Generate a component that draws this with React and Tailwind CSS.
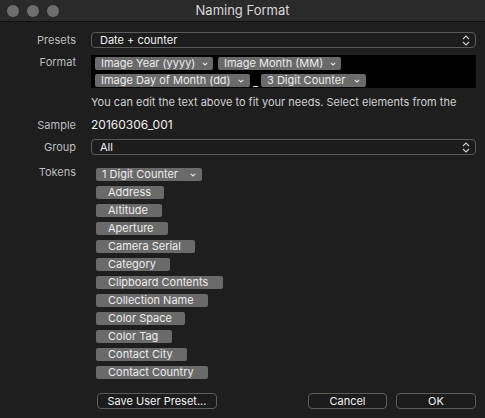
import React from "react";

const font = { fontFamily: "Inter, 'Liberation Sans', sans-serif" };

function Chevron() {
  return (
    <svg width="6" height="4" viewBox="0 0 6 4" className="ml-[7px] shrink-0">
      <path d="M0.8 0.8 L3 3 L5.2 0.8" fill="none" stroke="#e6e6e6" strokeWidth="1.1" />
    </svg>
  );
}

function UpDown() {
  return (
    <svg width="8" height="11" viewBox="0 0 8 11">
      <path d="M1 4 L4 1 L7 4" fill="none" stroke="#cfcfcf" strokeWidth="1.1" />
      <path d="M1 7 L4 10 L7 7" fill="none" stroke="#cfcfcf" strokeWidth="1.1" />
    </svg>
  );
}

function FChip({ children, w }) {
  return (
    <div
      className="flex h-[13px] items-center rounded-[2px] bg-[#6a6a6a] pl-[6px] text-[11px] leading-[13px] text-[#ececec]"
      style={{ width: w }}
    >
      <span className="whitespace-nowrap">{children}</span>
      <div className="flex-1" />
      <Chevron />
      <div className="w-[6px]" />
    </div>
  );
}

function Select({ children }) {
  return (
    <div className="flex h-[16px] items-center rounded-[4px] border border-[#5a5a5a] bg-[#1c1c1c] pl-[8px] pr-[5px] text-[11px] text-[#f0f0f0]">
      <span className="flex-1">{children}</span>
      <UpDown />
    </div>
  );
}

function Label({ children, className = "" }) {
  return (
    <div className={"text-right text-[11px] text-[#bdbdbd] " + className}>{children}</div>
  );
}

const tokens = [
  ["Address", 68],
  ["Altitude", 66],
  ["Aperture", 72],
  ["Camera Serial", 99],
  ["Category", 74],
  ["Clipboard Contents", 127],
  ["Collection Name", 112],
  ["Color Space", 89],
  ["Color Tag", 76],
  ["Contact City", 91],
  ["Contact Country", 112],
];

function Button({ children, w }) {
  return (
    <div
      className="flex h-[16px] items-center justify-center rounded-[4px] border border-[#5c5c5c] bg-[#1c1c1c] text-[11px] text-[#f2f2f2]"
      style={{ width: w }}
    >
      {children}
    </div>
  );
}

export default function App() {
  return (
    <div className="h-[418px] w-[485px] overflow-hidden bg-[#1e1e1e]" style={font}>
      {/* Title bar */}
      <div className="relative flex h-[22px] items-center border-b border-[#111] bg-[#2a2a2a]">
        <div className="flex gap-[8px] pl-[7px]">
          <div className="h-[12px] w-[12px] rounded-full bg-[#6e6e6e]" />
          <div className="h-[12px] w-[12px] rounded-full bg-[#6e6e6e]" />
          <div className="h-[12px] w-[12px] rounded-full bg-[#6e6e6e]" />
        </div>
        <div className="absolute inset-0 flex items-center justify-center text-[13px] text-[#d8d8d8]">
          Naming Format
        </div>
      </div>

      <div className="grid grid-cols-[76px_1fr] gap-x-[15px] pr-[9px] pt-[10px]">
        {/* Presets */}
        <Label className="leading-[16px]">Presets</Label>
        <Select>Date + counter</Select>

        {/* Format */}
        <Label className="mt-[8px] leading-[13px]">Format</Label>
        <div className="mt-[7px] h-[33px] bg-black pl-[4px] pt-[2px]">
          <div className="flex gap-[5px]">
            <FChip w={118}>Image Year (yyyy)</FChip>
            <FChip w={123}>Image Month (MM)</FChip>
          </div>
          <div className="mt-[2px] flex items-center">
            <FChip w={155}>Image Day of Month (dd)</FChip>
            <span className="mx-[3px] mt-[4px] text-[11px] leading-[13px] text-[#ececec]">_</span>
            <FChip w={105}>3 Digit Counter</FChip>
          </div>
        </div>

        {/* Help */}
        <div />
        <div className="mt-[7px] whitespace-nowrap text-[11px] leading-[14px] text-[#cfcfcf]">
          You can edit the text above to fit your needs. Select elements from the
        </div>

        {/* Sample */}
        <Label className="mt-[9px] leading-[14px]">Sample</Label>
        <div className="mt-[9px] text-[12px] leading-[14px] text-[#f0f0f0]">20160306_001</div>

        {/* Group */}
        <Label className="mt-[7px] leading-[16px]">Group</Label>
        <div className="mt-[7px]">
          <Select>All</Select>
        </div>

        {/* Tokens */}
        <Label className="mt-[10px] leading-[14px]">Tokens</Label>
        <div className="mt-[13px] flex flex-col items-start gap-[5px] pl-[5px]">
          <FChip w={106}>1 Digit Counter</FChip>
          {tokens.map(([t, w]) => (
            <div
              key={t}
              className="h-[13px] rounded-[2px] bg-[#6a6a6a] pl-[12px] text-[11px] leading-[13px] text-[#ececec]"
              style={{ width: w }}
            >
              {t}
            </div>
          ))}
        </div>
      </div>

      {/* Buttons */}
      <div className="mt-[14px] flex items-center pl-[97px] pr-[9px]">
        <Button w={120}>Save User Preset...</Button>
        <div className="flex-1" />
        <Button w={79}>Cancel</Button>
        <div className="w-[9px]" />
        <Button w={80}>OK</Button>
      </div>
    </div>
  );
}
